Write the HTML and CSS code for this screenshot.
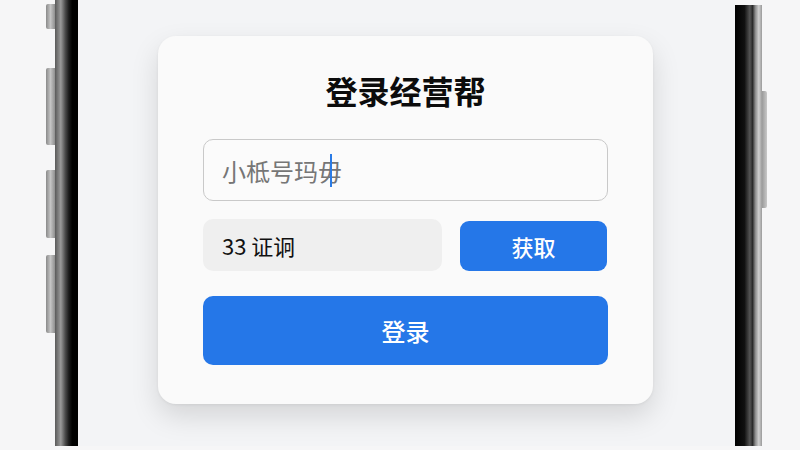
FILE: index.html
```html
<!DOCTYPE html>
<html lang="zh-CN">
<head>
  <meta charset="UTF-8" />
  <meta name="viewport" content="width=device-width, initial-scale=1.0"/>
  <title>登录经营帮</title>
  <link rel="stylesheet" href="styles.css">
</head>
<body>
  <div class="device">
    <div class="side-keys">
      <span class="key key-a"></span>
      <span class="key key-b"></span>
      <span class="key key-c"></span>
      <span class="key key-d"></span>
    </div>
    <div class="bezel bezel-left"></div>

    <main class="screen">
      <section class="card">
        <h1>登录经营帮</h1>
        <div class="field">小柢号玛<span class="caret"></span>毋</div>
        <div class="code-row">
          <div class="code-box">33 证诇</div>
          <button class="btn btn-get">获取</button>
        </div>
        <button class="btn btn-login">登录</button>
      </section>
    </main>

    <div class="bezel bezel-right"></div>
    <div class="side-keys side-keys-right">
      <span class="key key-power"></span>
    </div>
  </div>
</body>
</html>
```

FILE: styles.css
```css
html, body {
  margin: 0;
  height: 450px;
  overflow: hidden;
  background: #f6f6f7;
  font-family: "Noto Sans CJK SC", "Noto Sans", sans-serif;
}
.device {
  display: flex;
  height: 446px;
  margin-left: 45px;
  width: 722px;
}
.side-keys {
  width: 10px;
  display: flex;
  flex-direction: column;
}
.key {
  display: block;
  width: 9px;
  margin-left: 1px;
  background: linear-gradient(90deg, #8a8a8a, #c4c4c4 50%, #8f8f8f);
  border-radius: 2px 0 0 2px;
}
.key-a { height: 25px; margin-top: 4px; }
.key-b { height: 77px; margin-top: 39px; }
.key-c { height: 68px; margin-top: 25px; }
.key-d { height: 78px; margin-top: 17px; }
.side-keys-right {
  width: 5px;
}
.key-power {
  width: 5px;
  margin: 91px 0 0;
  height: 117px;
  border-radius: 0 2px 2px 0;
  background: linear-gradient(90deg, #9a9a9a, #c8c8c8);
}
.bezel {
  width: 23px;
}
.bezel-left {
  background: linear-gradient(90deg, #5a5a5a 0, #9a9a9a 25%, #4a4a4a 45%, #1c1c1c 60%, #000 75%, #000 100%);
}
.bezel-right {
  width: 27px;
  margin-top: 5px;
  background: linear-gradient(90deg, #000 0, #101010 35%, #555 55%, #2a2a2a 65%, #8a8a8a 75%, #d0d0d0 88%, #9a9a9a 100%);
}
.screen {
  flex: 1;
  background: #f3f4f6;
  padding: 36px 0 0 80px;
  box-sizing: border-box;
}
.card {
  width: 495px;
  box-sizing: border-box;
  padding: 34px 45px 39px;
  background: #fafafa;
  border-radius: 18px;
  box-shadow: 0 12px 28px rgba(0, 0, 0, 0.13), 0 1px 3px rgba(0, 0, 0, 0.06);
}
.card h1 {
  margin: 0;
  text-align: center;
  font-size: 32px;
  line-height: 40px;
  font-weight: 700;
  color: #0c0c0c;
}
.field {
  margin-top: 29px;
  height: 62px;
  box-sizing: border-box;
  border: 1px solid #c9c9c9;
  border-radius: 10px;
  background: #fbfbfb;
  padding-left: 18px;
  display: flex;
  align-items: center;
  font-size: 24px;
  color: #767676;
}
.caret {
  display: inline-block;
  width: 2px;
  height: 33px;
  background: #2a7be6;
  margin: 0 -14px 0 12px;
  position: relative;
  z-index: 1;
}
.code-row {
  display: flex;
  gap: 18px;
  margin-top: 18px;
  height: 52px;
}
.code-box {
  width: 239px;
  background: #efefef;
  border-radius: 10px;
  padding-left: 19px;
  box-sizing: border-box;
  display: flex;
  align-items: center;
  font-size: 22px;
  color: #111;
}
.btn {
  border: none;
  background: #2577e8;
  color: #fff;
  font-family: inherit;
  font-weight: 500;
  cursor: pointer;
}
.btn-get {
  width: 147px;
  border-radius: 9px;
  font-size: 22px;
  margin-top: 2px;
}
.btn-login {
  display: block;
  width: 100%;
  height: 69px;
  margin-top: 25px;
  border-radius: 10px;
  font-size: 24px;
}
```
